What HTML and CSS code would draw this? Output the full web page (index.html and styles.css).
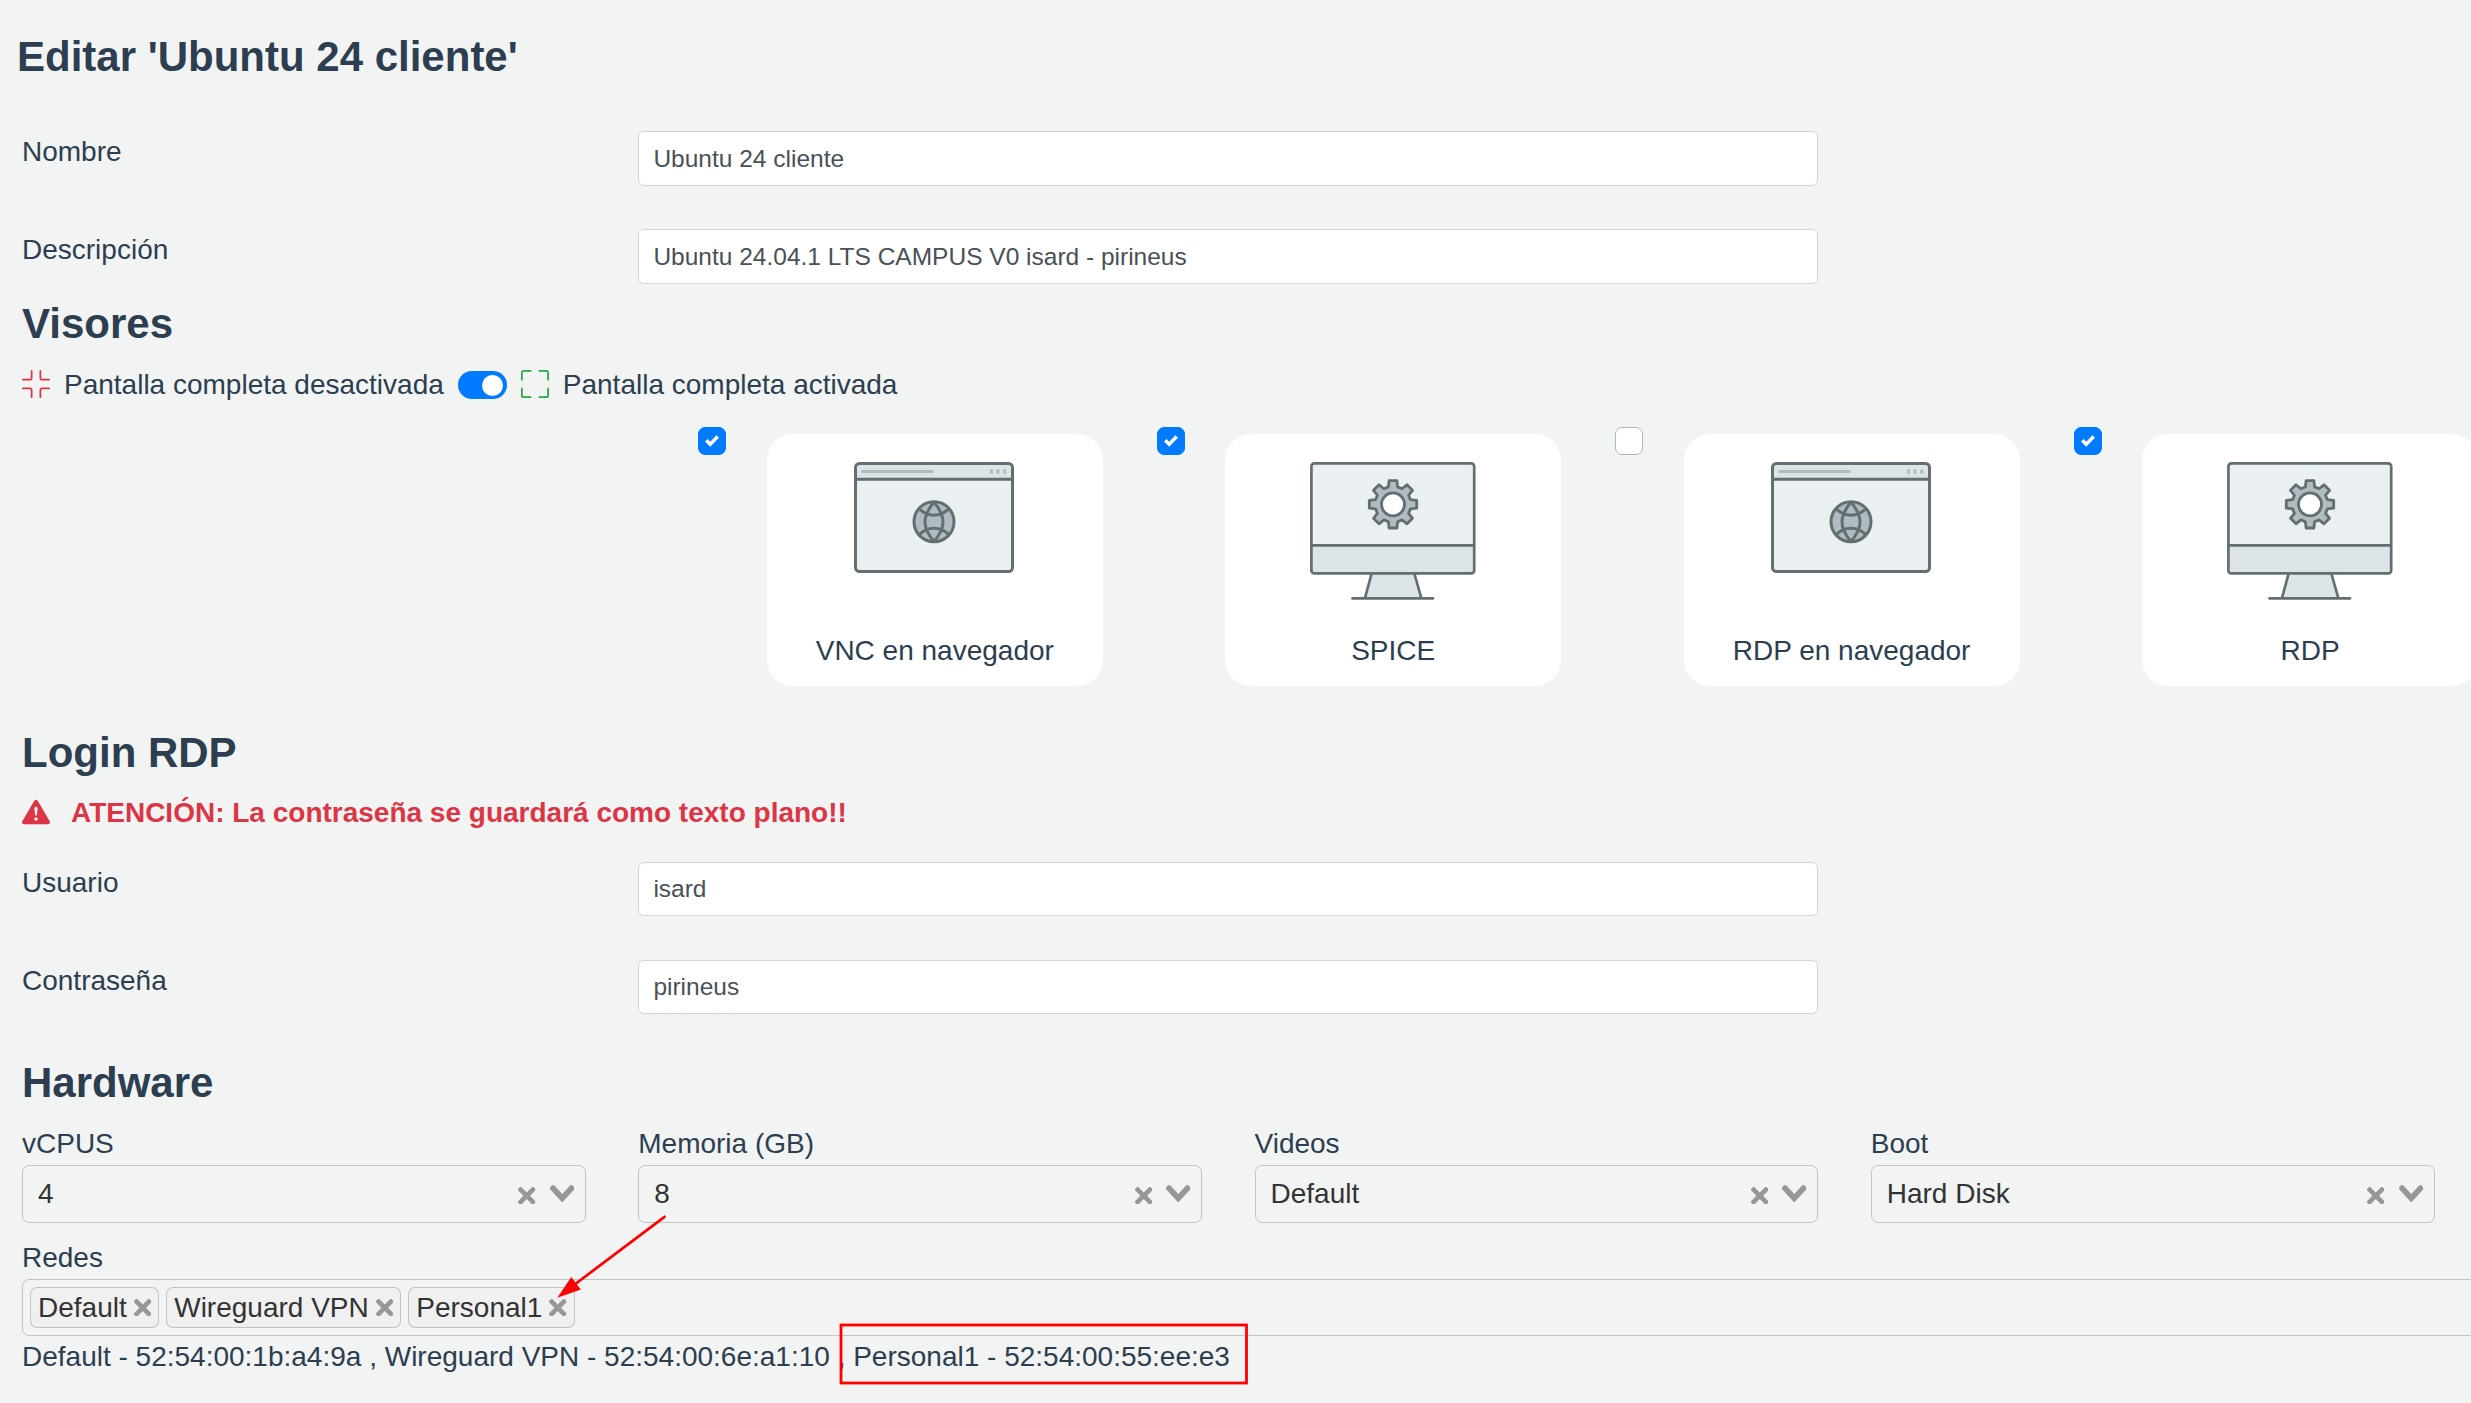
FILE: index.html
```html
<!DOCTYPE html>
<html lang="es">
<head>
<meta charset="utf-8">
<title>Editar 'Ubuntu 24 cliente'</title>
<link rel="stylesheet" href="styles.css">
</head>
<body>
<svg class="defs" width="0" height="0" aria-hidden="true">
  <symbol id="i-clear" viewBox="0 0 10 10"><path d="M6.895455 5l2.842897-2.842898c.348864-.348863.348864-.914488 0-1.263636L9.106534.261648c-.348864-.348864-.914489-.348864-1.263636 0L5 3.104545 2.157102.261648c-.348863-.348864-.914488-.348864-1.263636 0L.261648.893466c-.348864.348864-.348864.914489 0 1.263636L3.104545 5 .261648 7.842898c-.348864.348863-.348864.914488 0 1.263636l.631818.631818c.348864.348864.914773.348864 1.263636 0L5 6.895455l2.842898 2.842897c.348863.348864.914772.348864 1.263636 0l.631818-.631818c.348864-.348864.348864-.914489 0-1.263636L6.895455 5z"/></symbol>
  <symbol id="i-chevron" viewBox="0 0 14 10"><path d="M9.211364 7.59931l4.48338-4.867229c.407008-.441854.407008-1.158247 0-1.60046l-.73712-.80023c-.407008-.441854-1.066904-.441854-1.474243 0L7 5.198617 2.51662.33139c-.407008-.441853-1.066904-.441853-1.474243 0l-.737121.80023c-.407008.441854-.407008 1.158248 0 1.600461l4.48338 4.867228L7 10l2.211364-2.40069z"/></symbol>
  <symbol id="i-check" viewBox="0 0 8 8"><path fill="#fff" d="M6.564.75l-3.59 3.612-1.538-1.55L0 4.26l2.974 2.99L8 2.193z"/></symbol>
  <symbol id="i-browser" viewBox="0 0 160 138">
    <rect x="1.5" y="1.5" width="157" height="108" rx="4" fill="#eaeff2"/>
    <path d="M1.5 17.3V5.5a4 4 0 0 1 4-4h149a4 4 0 0 1 4 4v11.8z" fill="#dde4e7"/>
    <g fill="none" stroke="#636e70" stroke-width="3">
      <rect x="1.5" y="1.5" width="157" height="108" rx="4"/>
      <path d="M1.5 17.3h157"/>
      <circle cx="80" cy="59.7" r="20" fill="#b0bcc2"/>
      <path d="M80 40c-12 15-12 25 0 39.500M80 40c12 15 12 25 0 39.500M65.500 47.200c8.500 8 20.500 8 29 0M65.500 72.300c8.500-8 20.500-8 29 0"/>
    </g>
    <g fill="none" stroke="#b0bcc2" stroke-width="3" stroke-linecap="round">
      <path d="M8.500 9.500h69.800M137.500 8.500v2M144 8.500v2M150.700 8.500v2"/>
    </g>
  </symbol>
  <symbol id="i-monitor" viewBox="0 0 166 138">
    <path d="M61.500 111.500h43l7 25H55z" fill="#dde4e7"/>
    <rect x="1.400" y="1.400" width="162.800" height="110" rx="3" fill="#eaeff2"/>
    <path d="M1.400 83.300h162.800v25.100a3 3 0 0 1-3 3H4.400a3 3 0 0 1-3-3z" fill="#dde4e7"/>
    <g fill="none" stroke="#636e70" stroke-width="2.700" stroke-linejoin="round">
      <rect x="1.400" y="1.400" width="162.800" height="110" rx="3"/>
      <path d="M1.400 83.300h162.800M61.500 112l-6.500 24M104.500 112l6.800 24"/>
      <path d="M42.500 136.400h80.500" stroke-linecap="round"/>
    </g>
    <g transform="translate(83 42.300)" stroke="#636e70" stroke-width="2.800" stroke-linejoin="round">
      <path fill="#b0bcc2" d="M-4.600-17.400L-3.900-23.700 3.900-23.700 4.600-17.400 9.050-15.550 14-19.500 19.500-14 15.550-9.050 17.400-4.600 23.700-3.900 23.700 3.900 17.400 4.600 15.550 9.050 19.500 14 14 19.500 9.050 15.550 4.600 17.400 3.900 23.700-3.900 23.700-4.600 17.400-9.050 15.550-14 19.500-19.500 14-15.550 9.050-17.400 4.600-23.700 3.900-23.700-3.900-17.400-4.600-15.550-9.050-19.500-14-14-19.500-9.050-15.550z"/>
      <circle r="11.500" fill="#fff"/>
    </g>
  </symbol>
</svg>

<main class="page">
  <h1 class="title">Editar 'Ubuntu 24 cliente'</h1>

  <section class="fields">
    <div class="field"><label for="nombre">Nombre</label><input id="nombre" type="text" value="Ubuntu 24 cliente"></div>
    <div class="field"><label for="desc">Descripción</label><input id="desc" type="text" value="Ubuntu 24.04.1 LTS CAMPUS V0 isard - pirineus"></div>
  </section>

  <section class="viewers">
    <h2>Visores</h2>
    <div class="fullscreen">
      <svg class="ico red" viewBox="0 0 16 16"><path fill="none" stroke="currentColor" stroke-linecap="round" d="M5.500.500v4a1 1 0 0 1-1 1h-4M10.500.500v4a1 1 0 0 0 1 1h4M.500 10.500h4a1 1 0 0 1 1 1v4M15.500 10.500h-4a1 1 0 0 0-1 1v4"/></svg>
      <span class="off-label">Pantalla completa desactivada</span>
      <span class="switch"><span class="knob"></span></span>
      <svg class="ico green" viewBox="0 0 16 16"><path fill="none" stroke="currentColor" stroke-linecap="round" d="M.500 5.500v-4a1 1 0 0 1 1-1h4M10.500.500h4a1 1 0 0 1 1 1v4M.500 10.500v4a1 1 0 0 0 1 1h4M15.500 10.500v4a1 1 0 0 1-1 1h-4"/></svg>
      <span class="on-label">Pantalla completa activada</span>
    </div>
    <div class="viewer-list">
      <div class="viewer"><span class="check on"><svg><use href="#i-check"/></svg></span><div class="card"><svg class="browser"><use href="#i-browser"/></svg><span>VNC en navegador</span></div></div>
      <div class="viewer"><span class="check on"><svg><use href="#i-check"/></svg></span><div class="card"><svg class="monitor"><use href="#i-monitor"/></svg><span>SPICE</span></div></div>
      <div class="viewer"><span class="check"></span><div class="card"><svg class="browser"><use href="#i-browser"/></svg><span>RDP en navegador</span></div></div>
      <div class="viewer"><span class="check on"><svg><use href="#i-check"/></svg></span><div class="card"><svg class="monitor"><use href="#i-monitor"/></svg><span>RDP</span></div></div>
    </div>
  </section>

  <section class="login">
    <h2>Login RDP</h2>
    <p class="warning">
      <svg class="ico" viewBox="0 0 16 16"><path fill="currentColor" d="M8.982 1.566a1.130 1.130 0 0 0-1.960 0L.165 13.233c-.457.778.091 1.767.980 1.767h13.713c.889 0 1.438-.990.980-1.767L8.982 1.566zM8 5c.535 0 .954.462.900.995l-.350 3.507a.552.552 0 0 1-1.100 0L7.100 5.995A.905.905 0 0 1 8 5zm.002 6a1 1 0 1 1 0 2 1 1 0 0 1 0-2z"/></svg>
      <span>ATENCIÓN: La contraseña se guardará como texto plano!!</span>
    </p>
    <div class="field"><label for="user">Usuario</label><input id="user" type="text" value="isard"></div>
    <div class="field"><label for="pass">Contraseña</label><input id="pass" type="text" value="pirineus"></div>
  </section>

  <section class="hardware">
    <h2>Hardware</h2>
    <div class="selects">
      <div class="col"><span class="lbl">vCPUS</span><div class="select"><span class="val">4</span><svg class="clear"><use href="#i-clear"/></svg><svg class="chev"><use href="#i-chevron"/></svg></div></div>
      <div class="col"><span class="lbl">Memoria (GB)</span><div class="select"><span class="val">8</span><svg class="clear"><use href="#i-clear"/></svg><svg class="chev"><use href="#i-chevron"/></svg></div></div>
      <div class="col"><span class="lbl">Videos</span><div class="select"><span class="val">Default</span><svg class="clear"><use href="#i-clear"/></svg><svg class="chev"><use href="#i-chevron"/></svg></div></div>
      <div class="col"><span class="lbl">Boot</span><div class="select"><span class="val">Hard Disk</span><svg class="clear"><use href="#i-clear"/></svg><svg class="chev"><use href="#i-chevron"/></svg></div></div>
    </div>
    <div class="networks">
      <span class="lbl">Redes</span>
      <div class="tags">
        <span class="tag">Default<svg class="remove"><use href="#i-clear"/></svg></span>
        <span class="tag">Wireguard VPN<svg class="remove"><use href="#i-clear"/></svg></span>
        <span class="tag">Personal1<svg class="remove"><use href="#i-clear"/></svg></span>
      </div>
      <p class="macs">Default - 52:54:00:1b:a4:9a , Wireguard VPN - 52:54:00:6e:a1:10 , Personal1 - 52:54:00:55:ee:e3</p>
    </div>
  </section>

  <svg class="annotations" viewBox="0 0 2471 1403">
    <path d="M664.500 1216.800L572 1286.500" stroke="#f00" stroke-width="2.700" stroke-linecap="round"/>
    <path d="M557.300 1297.700l14-20.700 9.500 12.600z" fill="#f00"/>
    <rect x="841" y="1325" width="405.500" height="58" fill="none" stroke="#f00" stroke-width="2.800"/>
  </svg>
</main>
</body>
</html>
```
FILE: styles.css
```css
* { box-sizing: border-box; }

body {
  margin: 0;
  background: #f2f4f3;
  color: #2c3e50;
  font: 28px/42px "Liberation Sans", Arial, sans-serif;
}

.defs { position: absolute; }

svg { display: block; flex: none; }

.page {
  position: relative;
  height: 1403px;
  overflow: hidden;
  padding: 32px 0 0 22px;
}

h1, h2 {
  margin: 0;
  font-size: 42px;
  line-height: 50px;
  font-weight: 700;
}

.title { margin-left: -5px; }

/* label + input rows */
.fields { margin-top: 49px; }

.field {
  display: grid;
  grid-template-columns: 616px 1180px;
  height: 98px;
  align-items: start;
}

.field input {
  height: 55px;
  padding: 0 14.4px;
  border: 1px solid #ced4da;
  border-radius: 5.6px;
  background: #fff;
  color: #495057;
  font: 24.5px/36px "Liberation Sans", Arial, sans-serif;
}

/* viewers */
.viewers { margin-top: -28px; }

.fullscreen {
  display: flex;
  align-items: center;
  height: 42px;
  margin-top: 14px;
}

.ico { width: 28px; height: 28px; }
.red { color: #dc3545; }
.green { color: #28a745; }
.off-label, .on-label { margin-left: 14px; padding-top: 2px; }

.switch {
  display: flex;
  justify-content: flex-end;
  width: 49px;
  height: 28px;
  margin: 2px 14px 0 14px;
  padding: 3.5px;
  border-radius: 14px;
  background: #007bff;
}

.knob {
  width: 21px;
  height: 21px;
  border-radius: 50%;
  background: #fff;
}

.viewer-list {
  display: flex;
  margin: 22px 0 0 676.3px;
}

.viewer {
  display: flex;
  flex: none;
  gap: 40.5px;
  width: 458.42px;
}

.check {
  display: flex;
  align-items: center;
  justify-content: center;
  flex: none;
  width: 28px;
  height: 28px;
  border: 1px solid #adb5bd;
  border-radius: 7px;
  background: #fff;
}

.check.on { border-color: #007bff; background: #007bff; }
.check svg { width: 14px; height: 14px; }

.card {
  display: flex;
  flex-direction: column;
  align-items: center;
  flex: none;
  width: 336px;
  height: 252px;
  margin-top: 7px;
  padding-top: 28px;
  border-radius: 26px;
  background: #fff;
}

.card span { margin-top: 30px; }
.browser { width: 160px; height: 138px; margin-right: 2px; }
.monitor { width: 166px; height: 138px; }

/* RDP login */
.login { margin-top: 42px; }

.warning {
  display: flex;
  align-items: center;
  gap: 21px;
  height: 42px;
  margin: 13px 0 29px;
  color: #dc3545;
  font-weight: 700;
}

.warning span { padding-top: 2px; }

.login .field input { height: 54px; }

/* hardware */
.selects {
  display: grid;
  grid-template-columns: repeat(4, 563.75px);
  gap: 52.5px;
  margin-top: 15px;
}

.lbl { display: block; }

.select {
  display: flex;
  align-items: center;
  height: 58px;
  padding: 0 10.5px 0 15px;
  border: 1px solid rgba(60, 60, 60, .26);
  border-radius: 7px;
  color: #333;
}

.val { flex: 1; }

.clear, .remove { width: 17.5px; height: 17.5px; fill: #969797; }
.clear { margin: 3px 14px 0 0; }
.chev { width: 24.5px; height: 17.5px; fill: #969797; }

.networks { width: 2600px; margin-top: 14px; }

.tags {
  display: flex;
  align-items: center;
  gap: 7px;
  height: 57px;
  padding-left: 7px;
  border: 1px solid rgba(60, 60, 60, .26);
  border-radius: 7px;
  color: #333;
}

.tag {
  display: flex;
  align-items: center;
  gap: 7px;
  height: 41px;
  padding: 0 7px;
  border: 1px solid rgba(60, 60, 60, .26);
  border-radius: 7px;
  background: #f0f0f0;
}

.macs { margin: 0; white-space: nowrap; }

/* red marks drawn over the form */
.annotations {
  position: absolute;
  top: 0;
  left: 0;
  width: 2471px;
  height: 1403px;
}
```
